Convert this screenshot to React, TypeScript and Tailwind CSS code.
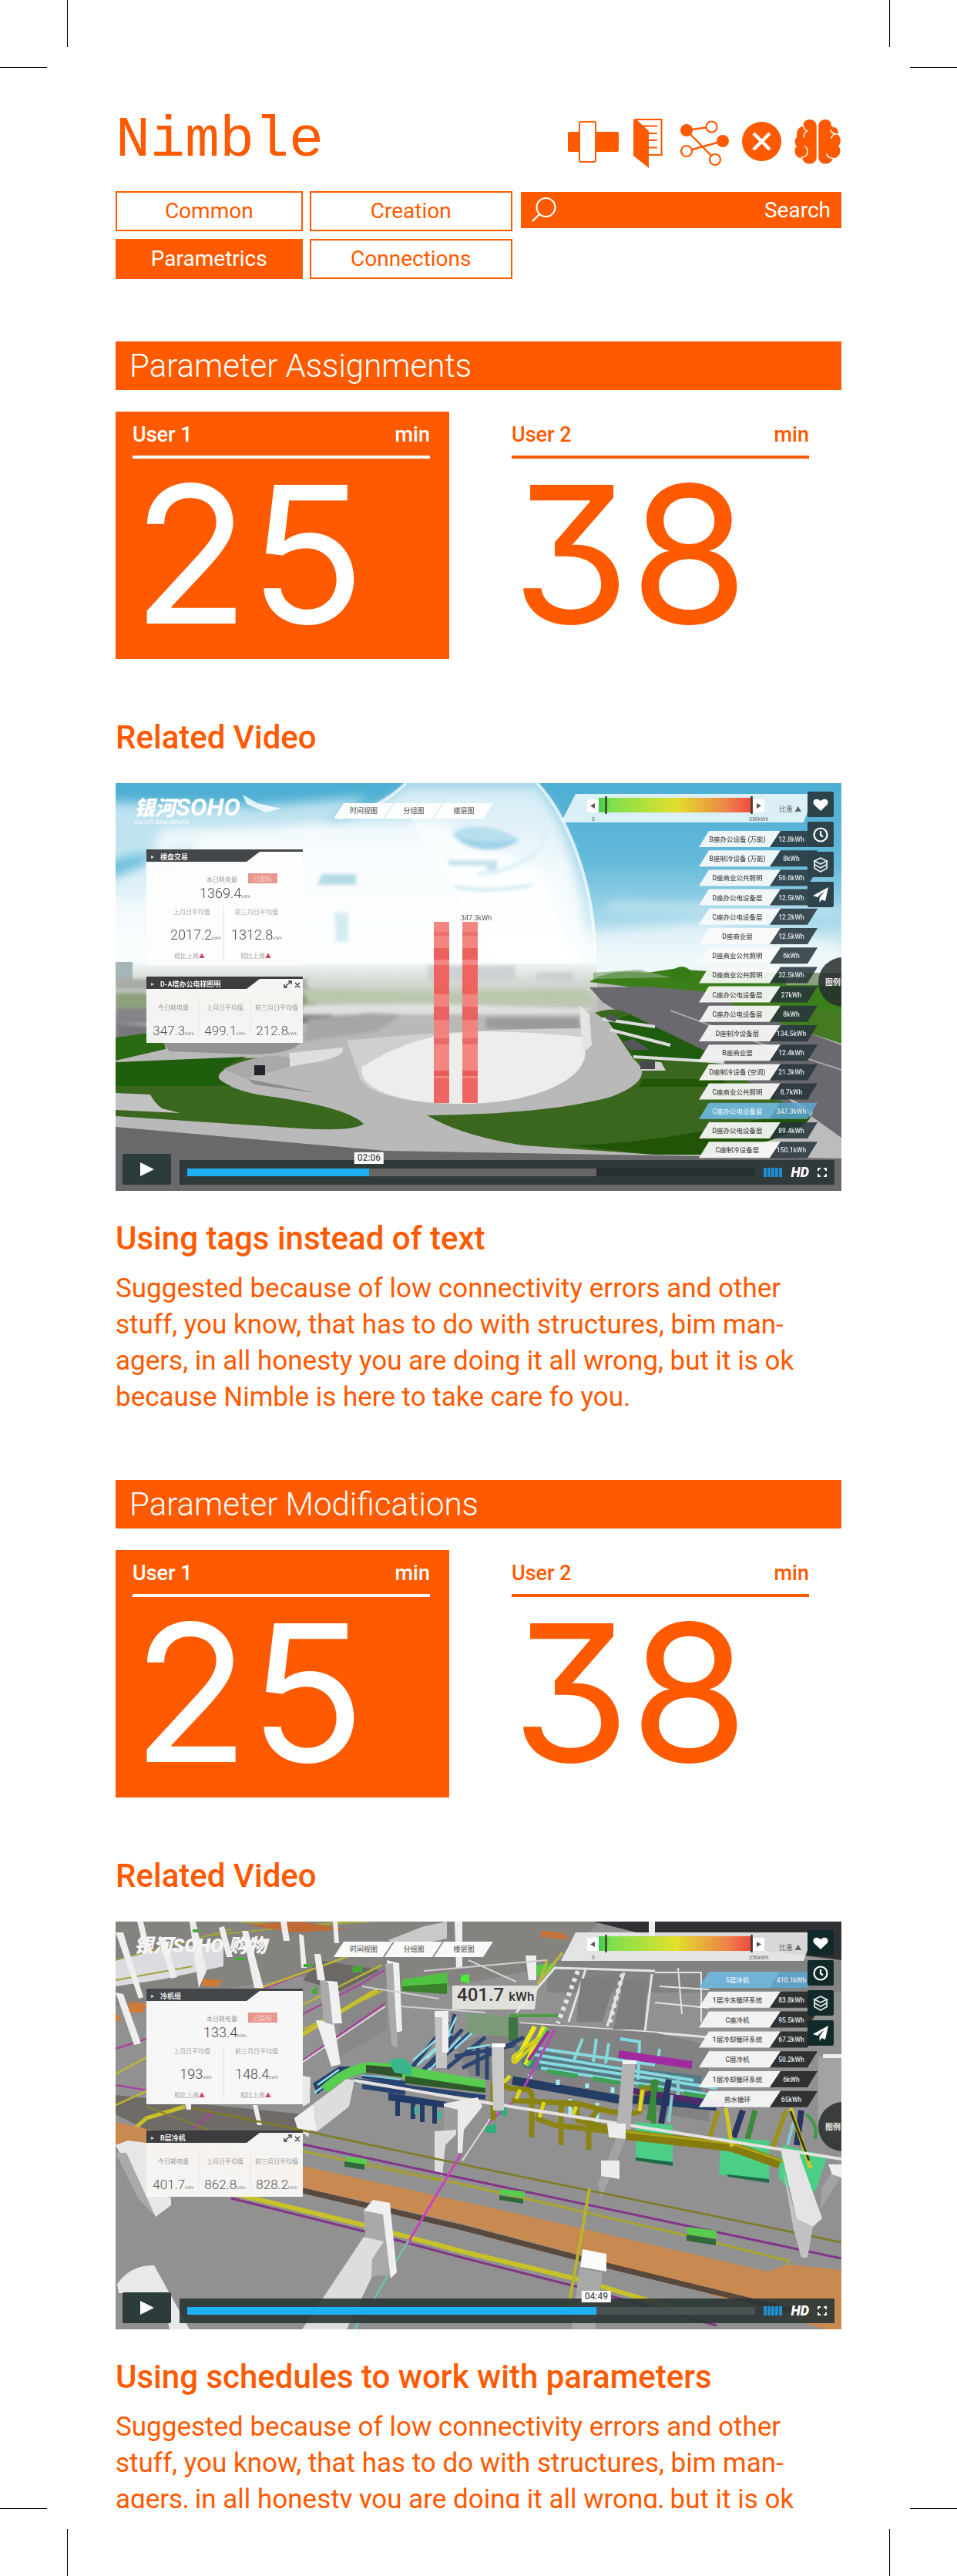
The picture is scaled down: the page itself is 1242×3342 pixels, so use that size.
import type { ReactNode } from "react";

const ORANGE = "#ff5a00";

/* ---------- Header icons ---------- */

function JoinIcon() {
  return (
    <svg width="68" height="64" viewBox="0 0 68 64" aria-hidden="true">
      <rect x="0" y="17" width="66" height="26" rx="2" fill={ORANGE} />
      <rect x="15" y="4" width="21" height="52" rx="2" fill="#fff" stroke={ORANGE} strokeWidth="2" />
    </svg>
  );
}

function BookIcon() {
  return (
    <svg width="44" height="64" viewBox="0 0 44 64" aria-hidden="true">
      <path d="M1.5 1H36.5V47H19" fill="none" stroke={ORANGE} strokeWidth="2" />
      <path d="M10 9.500H31M16 19H31M19 28H31M19 37.500H31" stroke={ORANGE} strokeWidth="2" />
      <path d="M0 1H4L20 16V64L0 48Z" fill={ORANGE} />
    </svg>
  );
}

function NetworkIcon() {
  return (
    <svg width="63" height="64" viewBox="0 0 63 64" aria-hidden="true">
      <path d="M8 15L40 10.500M8 15L45 53M8 42L55 29" stroke={ORANGE} strokeWidth="2.400" />
      <circle cx="8" cy="15" r="8" fill={ORANGE} />
      <circle cx="55" cy="29" r="8" fill={ORANGE} />
      <circle cx="40.500" cy="10.500" r="7" fill="#fff" stroke={ORANGE} strokeWidth="2.200" />
      <circle cx="8" cy="42" r="7" fill="#fff" stroke={ORANGE} strokeWidth="2.200" />
      <circle cx="45" cy="53" r="7" fill="#fff" stroke={ORANGE} strokeWidth="2.200" />
    </svg>
  );
}

function CloseIcon() {
  return (
    <svg width="51" height="64" viewBox="0 0 51 64" aria-hidden="true">
      <circle cx="25.500" cy="29.500" r="25.500" fill={ORANGE} />
      <path d="M15 19L36 40M36 19L15 40" stroke="#fff" strokeWidth="4.500" />
    </svg>
  );
}

function BrainIcon() {
  return (
    <svg width="61" height="64" viewBox="0 0 61 64" aria-hidden="true">
      <g fill={ORANGE}>
        <path d="M28.700 10V50C28.700 55 25 58.500 19.500 58.500C15 58.500 11.500 56 10 51.500C4 51 0.500 47 0.500 42C0.500 39 1.500 37 3 35.500C0 33 -0.500 27 3 24C2.500 16 5 10.500 11.500 10C11 4 15 1 20 1C25 1 28.700 4.500 28.700 10Z" />
        <path d="M31.300 10V50C31.300 55 35 58.500 40.500 58.500C45 58.500 48.500 56 50 51.500C56 51 59.500 47 59.500 42C59.500 39 58.500 37 57 35.500C61 32 60.500 25 57 21.500C57.500 14 54 10 48.500 10C48 4 45 1 40 1C35 1 31.300 4.500 31.300 10Z" />
      </g>
      <g fill="none" stroke="#fff" strokeWidth="1.500" strokeLinecap="round">
        <path d="M11 8Q12 15 17 16M16 16Q12 19 12 24" />
        <path d="M14 36Q18 39 16.500 46Q14 50 9 50.500" />
        <path d="M48 8Q51 10 51 11M47 15Q50 20 54 20Q57 20 58 20M53 20Q49 21 48 25" />
        <path d="M42 46Q43 51 51 51.500" />
      </g>
    </svg>
  );
}

/* ---------- Video frames ---------- */

type Panel = { top: number; title: string; values: string[] };

function SummaryPanel({ top, title, values }: Panel) {
  return (
    <g transform={`translate(40 ${top})`}>
      <rect width="203" height="150" fill="#fdfdfd" fillOpacity="0.950" />
      <path d="M0 0H203V3H147L130 16H0Z" fill="#43474a" />
      <text x="6" y="12" fontSize="8" fill="#ddd">▸</text>
      <text x="18" y="12.500" fontSize="9" fontWeight="700" fill="#f4f4f4">{title}</text>
      <text x="78" y="42" fontSize="8" fill="#999">本日耗电量</text>
      <rect x="132" y="31" width="38" height="13" fill="#e9968c" />
      <text x="151" y="41" fontSize="8" fill="#f7d8d3" textAnchor="middle">已超标</text>
      <g fontSize="18" fill="#4b4b4b" fontWeight="300" textAnchor="middle">
        <text x="102" y="63">{values[0]}<tspan fontSize="6">kWh</tspan></text>
        <text x="64" y="117">{values[1]}<tspan fontSize="6">kWh</tspan></text>
        <text x="143" y="117">{values[2]}<tspan fontSize="6">kWh</tspan></text>
      </g>
      <path d="M100 74V144" stroke="#e2e2e2" />
      <g fontSize="8" fill="#a5a5a5" textAnchor="middle">
        <text x="59" y="84">上月日平均值</text>
        <text x="143" y="84">前三月日平均值</text>
        <text x="56" y="141">相比上周<tspan fill="#d6455c">▲</tspan></text>
        <text x="142" y="141">相比上周<tspan fill="#d6455c">▲</tspan></text>
      </g>
    </g>
  );
}

function DetailPanel({ top, title, values }: Panel) {
  return (
    <g transform={`translate(40 ${top})`}>
      <rect width="203" height="86" fill="#f8f8f6" fillOpacity="0.960" />
      <path d="M0 0H203V3H147L130 16H0Z" fill="#3d3d3f" />
      <text x="6" y="12" fontSize="8" fill="#ddd">▸</text>
      <text x="18" y="12.500" fontSize="9" fontWeight="700" fill="#f4f4f4">{title}</text>
      <path d="M179 14L188 6M179 10V14H183M184 6H188V10M193 8L199 14M199 8L193 14" stroke="#444" fill="none" strokeWidth="1.500" />
      <g fontSize="8" fill="#9a9a9a" textAnchor="middle">
        <text x="35" y="43">今日耗电量</text>
        <text x="102" y="43">上月日平均值</text>
        <text x="169" y="43">前三月日平均值</text>
      </g>
      <path d="M68 28V78M135 28V78" stroke="#e6e6e6" />
      <g fontSize="17" fill="#555" fontWeight="300" textAnchor="middle">
        <text x="35" y="76">{values[0]}<tspan fontSize="6">kWh</tspan></text>
        <text x="102" y="76">{values[1]}<tspan fontSize="6">kWh</tspan></text>
        <text x="169" y="76">{values[2]}<tspan fontSize="6">kWh</tspan></text>
      </g>
    </g>
  );
}

type Row = { label: string; value: string; active?: boolean };

function TagRows({ rows, top, pitch, dark }: { rows: Row[]; top: number; pitch: number; dark: string }) {
  return (
    <g fontSize="8.500" textAnchor="middle" fontWeight="500">
      {rows.map((row, i) => (
        <g key={i} transform={`translate(757 ${top + i * pitch})`}>
          <path d="M13 0H106L92 21H0Z" fill={row.active ? "#6fb7de" : "#fafafa"} fillOpacity="0.930" />
          <path d="M106 0H154L141 21H92Z" fill={row.active ? "#5ba6d2" : dark} fillOpacity="0.860" />
          <text x="50" y="14" fill={row.active ? "#e4f3fb" : "#4d4d4d"}>{row.label}</text>
          <text x="120" y="14" fill="#e0e4e6">{row.value}</text>
        </g>
      ))}
    </g>
  );
}

function RangeTray({ id, fill }: { id: string; fill: string }) {
  return (
    <g>
      <defs>
        <linearGradient id={id}>
          <stop offset="0" stopColor="#3fca4a" />
          <stop offset="0.080" stopColor="#7de04d" />
          <stop offset="0.500" stopColor="#e2e02c" />
          <stop offset="0.850" stopColor="#ee7d48" />
          <stop offset="1" stopColor="#ee4640" />
        </linearGradient>
      </defs>
      <path d="M597 14H906L893 51H578Z" fill={fill} fillOpacity="0.880" />
      <rect x="612" y="21" width="15" height="17" fill="#fff" />
      <rect x="827" y="21" width="15" height="17" fill="#fff" />
      <rect x="627" y="19" width="200" height="19" fill={`url(#${id})`} />
      <path d="M636.500 17V40M825.500 17V40" stroke="#3c3d2c" strokeWidth="2.500" />
      <path d="M622 26L616 29.500L622 33ZM832 26L838 29.500L832 33Z" fill="#555" />
      <g fontSize="7" fill="#666">
        <text x="618" y="49">0</text>
        <text x="822" y="49">350kWh</text>
        <text x="861" y="37" fontSize="9">比重 ▲</text>
      </g>
    </g>
  );
}

function ViewTabs() {
  return (
    <g>
      <path d="M296 26H360L347 46H283ZM362 26H424L411 46H349ZM426 26H490L477 46H413Z" fill="#fff" fillOpacity="0.950" />
      <g fontSize="9" fontWeight="500" fill="#666" textAnchor="middle">
        <text x="322" y="39">时间视图</text>
        <text x="387" y="39">分组图</text>
        <text x="452" y="39">楼层图</text>
      </g>
    </g>
  );
}

function LegendKnob({ y }: { y: number }) {
  return (
    <g>
      <circle cx="944" cy={y} r="32" fill="#272d2b" fillOpacity="0.850" />
      <text x="921" y={y + 4} fontSize="10" fontWeight="700" fill="#eee">图例</text>
    </g>
  );
}

const frameFont = "block h-auto w-full font-['Roboto','Noto_Sans_CJK_SC',sans-serif]";

const towerRows: Row[] = [
  { label: "B座办公设备 (万能)", value: "12.8kWh" },
  { label: "B座制冷设备 (万能)", value: "8kWh" },
  { label: "D座商业公共照明", value: "56.6kWh" },
  { label: "D座办公电设备层", value: "12.5kWh" },
  { label: "C座办公电设备层", value: "12.2kWh" },
  { label: "D座商业层", value: "12.5kWh" },
  { label: "D座商业公共照明", value: "6kWh" },
  { label: "D座商业公共照明", value: "32.5kWh" },
  { label: "C座办公电设备层", value: "27kWh" },
  { label: "C座办公电设备层", value: "8kWh" },
  { label: "D座制冷设备层", value: "134.5kWh" },
  { label: "B座商业层", value: "12.4kWh" },
  { label: "D座制冷设备 (空调)", value: "21.3kWh" },
  { label: "C座商业公共照明", value: "8.7kWh" },
  { label: "C座办公电设备层", value: "347.3kWh", active: true },
  { label: "D座办公电设备层", value: "89.4kWh" },
  { label: "C座制冷设备层", value: "150.1kWh" },
];

const redBands: [number, number, string][] = [
  [180, 235, "#f4827d"],
  [193, 5, "#ec6a64"],
  [214, 15, "#ec5b56"],
  [236, 38, "#ef605b"],
  [290, 17, "#ea5f5c"],
  [331, 8, "#e96560"],
  [373, 7, "#e65753"],
  [383, 32, "#ee605b"],
];

function TowerFrame() {
  return (
    <svg viewBox="0 0 942 529" className={frameFont} role="img" aria-label="Energy model of a tower">
      <defs>
        <linearGradient id="sky" x1="0" y1="0" x2="0" y2="1">
          <stop offset="0" stopColor="#4caed3" />
          <stop offset="0.400" stopColor="#63b9da" />
          <stop offset="0.700" stopColor="#a6d8ea" />
          <stop offset="1" stopColor="#f2f9fa" />
        </linearGradient>
        <linearGradient id="haze" x1="0" y1="0" x2="0" y2="1">
          <stop offset="0" stopColor="#fff" stopOpacity="0.550" />
          <stop offset="0.450" stopColor="#fff" stopOpacity="0.850" />
          <stop offset="1" stopColor="#fff" stopOpacity="0.780" />
        </linearGradient>
        <linearGradient id="horizon" x1="0" y1="0" x2="0" y2="1">
          <stop offset="0" stopColor="#eef5f4" />
          <stop offset="0.450" stopColor="#cdd2c9" />
          <stop offset="1" stopColor="#b9bdb4" />
        </linearGradient>
        <filter id="soft" x="-20%" y="-20%" width="140%" height="140%">
          <feGaussianBlur stdDeviation="7" />
        </filter>
        <filter id="softer" x="-20%" y="-20%" width="140%" height="140%">
          <feGaussianBlur stdDeviation="2" />
        </filter>
        <clipPath id="tower-clip"><rect width="942" height="529" /></clipPath>
      </defs>
      <g clipPath="url(#tower-clip)">
        <rect width="942" height="250" fill="url(#sky)" />
        <g filter="url(#soft)" fill="#fff">
          <path d="M-20 24L180 30L330 18L260 60L90 80L-20 105Z" opacity="0.620" />
          <path d="M60 60L420 50L560 120L600 240L-20 240L-20 130L40 105Z" opacity="0.750" />
          <path d="M-20 150H60V240H-20Z" opacity="0.500" />
          <path d="M640 158L942 164V168L640 163Z" opacity="0.900" />
          <path d="M600 195L760 180L942 205V240H600Z" opacity="0.550" />
        </g>
        <path d="M165 15L184 26L215 33L195 38L170 27Z" fill="#fff" opacity="0.800" />
        <g filter="url(#soft)">
          <path d="M110 70C200 66 310 56 377 6H547C580 44 608 130 612 215V244H90C60 200 80 120 110 70Z" fill="url(#haze)" />
        </g>
        <path d="M377 0H547C588 44 620 130 622 215V240H500L380 40L290 46C320 38 350 26 377 0Z" fill="#fff" opacity="0.450" />
        <path d="M547 0C588 44 620 130 622 215V250" fill="none" stroke="#fff" strokeWidth="4" opacity="0.700" />
        <path d="M377 0C350 26 320 38 290 46" fill="none" stroke="#fff" strokeWidth="4" opacity="0.700" />
        <g filter="url(#softer)">
          <path d="M436 66Q455 52 485 58Q510 62 524 74Q500 84 475 84Q450 80 436 66Z" fill="#b8dff0" />
          <path d="M440 68Q470 80 524 74Q505 88 475 86Q450 82 440 68Z" fill="#9fd2e6" />
          <path d="M268 118H312V132H262Z" fill="#b5dce6" />
          <path d="M432 100H495V118H482V107H432Z" fill="#c3e3ea" />
          <path d="M440 134Q480 144 540 132" stroke="#cbe9f0" strokeWidth="4" fill="none" />
          <path d="M284 168H302V206H286Z" fill="#d4ebf2" />
          <path d="M430 22Q520 20 560 60Q550 110 470 118" stroke="#dcf0f6" strokeWidth="5" fill="none" />
        </g>

        <rect y="250" width="942" height="279" fill="#b9b9b9" />
        <rect y="234" width="625" height="66" fill="url(#horizon)" />
        <path d="M0 232H22V262H0Z" fill="#a6b6b8" />
        <g filter="url(#softer)">
          <path d="M0 254H250V268H0Z" fill="#a8aca6" />
          <path d="M0 272H260V292H0Z" fill="#8fa07b" />
          <path d="M0 292H280V312H0Z" fill="#838487" />
          <path d="M0 312L80 318L60 338H0Z" fill="#76777a" />
          <path d="M405 237H518V256H405ZM546 245H594V258H546Z" fill="#cdd1d4" />
          <path d="M248 256H560V262H248Z" fill="#d6d8d4" />
          <path d="M244 268L420 272L610 268L622 285H250Z" fill="#bac7ac" />
          <path d="M244 288L400 286L620 292L600 300H240Z" fill="#dde0dc" />
          <path d="M250 306L330 298L372 300L340 322L243 335Z" fill="#a5a6a8" />
          <path d="M482 304L600 304L604 326L530 322L480 318Z" fill="#9a9b9c" />
        </g>
        <path d="M615 258Q640 240 690 246L730 240Q745 246 942 246V300L700 268Z" fill="#3b7f1b" />
        <path d="M620 246L680 242L720 252L620 254Z" fill="#82a678" opacity="0.700" />
        <path d="M722 244Q735 232 747 244L746 254H724Z" fill="#347b18" />
        <path d="M870 246H942V262H870Z" fill="#8da081" />
        <path d="M615 265L690 264L760 270L942 340V470L790 420L690 320L632 284Z" fill="#6a696f" />
        <path d="M760 268L942 298V338L830 300Z" fill="#447b22" />
        <path d="M720 295L820 332L942 372" stroke="#a5a5aa" strokeWidth="2" fill="none" />
        <path d="M622 298Q650 288 672 302L770 356L942 460V482H700L530 470Q450 458 404 431C480 430 570 426 640 408C690 390 690 372 672 358L640 310Z" fill="#3a661d" />
        <path d="M640 310L668 300L770 350L760 360L672 354Z" fill="#1f5c10" />
        <path d="M632 306L700 316M642 320L720 340M672 355L790 362" stroke="#dcdcdc" strokeWidth="4" fill="none" />
        <path d="M683 384H790V394H680Z" fill="#225607" />
        <path d="M590 470Q720 468 900 420V482H700Z" fill="#215407" />
        <path d="M860 400L900 430L942 460V490L760 484Q900 460 905 426Z" fill="#bcbcbc" />
        <path d="M640 300L652 304L648 310L636 306ZM658 336L672 332L694 346H668Z" fill="#55565b" />
        <path d="M682 360L708 362L714 373H682Z" fill="#d0d0d0" />
        <path d="M681 360H700V371H681Z" fill="#48484d" />

        <path d="M0 330L60 322L65 345L0 360Z" fill="#2a6a12" />
        <path d="M0 366L130 358L195 356Q125 370 135 384Q150 398 190 405Q300 420 322 442Q310 452 240 448L0 432Z" fill="#3a661d" />
        <path d="M0 362L170 355Q125 372 135 386L150 393H0Z" fill="#1f5e0d" />
        <path d="M0 402L45 404Q50 414 60 422L84 428L0 424Z" fill="#c2c2c2" />
        <path d="M60 335L240 335Q235 350 180 352L70 348Z" fill="#929292" />
        <path d="M225 350L294 343Q300 352 270 360L226 368Z" fill="#dedede" />
        <path d="M140 371Q190 348 226 356V368L180 380L170 384Z" fill="#a9a9a9" />
        <path d="M172 384L262 402L180 391Z" fill="#8c8c8c" />
        <rect x="180" y="366" width="14" height="13" fill="#23242c" />

        <path d="M300 334Q460 318 610 318V352C607 386 540 418 440 416C370 415 318 400 316 378Z" fill="#cfcfcf" />
        <path d="M320 368Q390 322 480 322Q560 324 609 330V352C607 386 540 418 440 416C370 415 314 398 320 368Z" fill="#ededed" />
        <path d="M602 288L615 300L618 340L606 350Z" fill="#e4e4e4" />
        <path d="M0 446L350 477L942 487V529H0Z" fill="#69686a" />

        <g opacity="0.960">
          {[413, 450].map((x) => (
            <g key={x}>
              {redBands.map(([y, h, fill], i) => (
                <rect key={i} x={x} y={y} width="20" height={h} fill={fill} />
              ))}
            </g>
          ))}
        </g>
        <text x="448" y="178" fontSize="9" fill="#555">347.3kWh</text>

        <text x="24" y="42" fontSize="27" fontWeight="900" fontStyle="italic" fill="#fff">
          银河<tspan fontSize="32" fontWeight="700">SOHO</tspan>
        </text>
        <text x="24" y="53" fontSize="7" fontStyle="italic" fill="#fff">GALAXY SOHO BEIJING</text>
        <ViewTabs />
        <RangeTray id="range-tower" fill="#eef7fb" />
        <SummaryPanel top={86} title="楼盘交易" values={["1369.4", "2017.2", "1312.8"]} />
        <DetailPanel top={251} title="D-A塔办公电梯照明" values={["347.3", "499.1", "212.8"]} />
        <TagRows rows={towerRows} top={62} pitch={25.2} dark="#26333a" />
        <LegendKnob y={258} />
      </g>
    </svg>
  );
}

const pipeRows: Row[] = [
  { label: "5层冷机", value: "410.1kWh", active: true },
  { label: "1层冷冻循环系统", value: "83.8kWh" },
  { label: "C座冷机", value: "95.5kWh" },
  { label: "1层冷却循环系统", value: "67.2kWh" },
  { label: "C层冷机", value: "50.2kWh" },
  { label: "1层冷却循环系统", value: "6kWh" },
  { label: "热水循环", value: "65kWh" },
];

const backColumns = [
  "M0 14L10 14L36 98L30 100Z",
  "M0 92L10 94L33 158L24 160Z",
  "M28 0H36L45 38L38 40Z",
  "M55 22L64 20L80 72L72 74Z",
  "M96 0H104L118 64L108 86Z",
  "M134 8L141 6L152 46L144 46Z",
  "M164 12L172 12L192 86L180 86Z",
  "M214 0H222L226 25L218 25Z",
  "M238 16L244 18L248 60L241 60Z",
  "M282 0H288L290 28L284 28Z",
  "M258 42L266 42L272 76L262 76Z",
  "M440 0H450V60H442Z",
  "M532 44H546V76H536Z",
  "M692 0H700V24H692Z",
];

function PipeFrame() {
  return (
    <svg viewBox="0 0 942 529" className={frameFont} role="img" aria-label="Building services model with pipes and ducts">
      <defs>
        <clipPath id="pipe-clip"><rect width="942" height="529" /></clipPath>
      </defs>
      <g clipPath="url(#pipe-clip)" fill="none">
        <rect width="942" height="529" fill="#919192" />
        <path d="M0 0H630L560 60L400 90L250 70L0 110Z" fill="#858380" />
        <path d="M0 225L243 250V280L40 270L0 250Z" fill="#6f6c67" />
        <path d="M620 0H942V50L700 20Z" fill="#303035" />
        <path d="M560 50H942V92H560Z" fill="#828282" />
        <path d="M0 50L60 36L140 26V58L60 75L0 84Z" fill="#dcdce0" />
        <path d="M354 24L400 6L430 0V22L372 34Z" fill="#c9c9c9" />
        <path d="M160 0L240 6L330 0M0 50L150 10M120 18L300 0M0 76L100 58" stroke="#a5a23a" strokeWidth="2" />
        <path d="M170 4L230 14L300 10L240 0Z" fill="#c06a35" />
        <path d="M552 12L580 14L590 24L552 20Z" fill="#c3733a" />
        <path d="M112 74L138 76L134 84L112 84ZM18 104L40 106L36 118H16ZM0 120L6 122V130H0Z" fill="#cf7a37" />
        <path d="M243 76L262 50L340 62L350 110L290 90Z" fill="#6c6866" />
        <path d="M292 90L350 60L352 140L290 175Z" fill="#888" />
        <path d="M0 165L40 152M190 88L260 60M243 120L320 80L350 62M243 180L350 106M130 245L100 268M0 212L60 222" stroke="#a8439f" strokeWidth="2.500" />
        <path d="M0 198L40 176M0 238L40 220M150 100L316 40M243 108L346 56M243 140L346 90" stroke="#bdb82b" strokeWidth="2.500" />
        <path d="M0 290L40 255L90 240M240 148L340 88" stroke="#c9c12a" strokeWidth="5" />
        <path d="M40 240L120 270" stroke="#89822f" strokeWidth="2" />
        <path d="M243 182L350 110" stroke="#e4d8d8" strokeWidth="2" />
        <g fill="#eeeeee">{backColumns.map((d) => <path key={d} d={d} />)}</g>
        <path d="M265 76L288 78L294 132H278ZM260 128L283 130L292 185L280 188ZM352 50L368 54L372 142L364 144Z" fill="#f0f0f0" />
        <path d="M265 76L276 78L282 134L270 130ZM350 55L360 54L366 164L358 160Z" fill="#aaa" />
        <path d="M90 236H98L98 244H92ZM178 238H184L190 264H184Z" fill="#eee" />

        <path d="M372 75L430 66L432 92L372 88Z" fill="#51c142" />
        <path d="M372 84L430 80V94L372 90Z" fill="#3c7f2c" />
        <path d="M448 70L458 68L460 80L448 78Z" fill="#4cea3a" />
        <path d="M306 60L320 56L320 66L308 66ZM254 90L262 84V94H256ZM155 46H168V50H155ZM244 55H255V59H244ZM100 10H108V14H100Z" fill="#44a93a" />
        <path d="M320 84L420 100M370 110L480 118M400 64L560 50M458 50L520 78" stroke="#d0d0d0" strokeWidth="2" />
        <path d="M546 56L572 54L566 68L546 70Z" fill="#59c946" />
        <path d="M548 80L580 40M560 50L545 92" stroke="#bcb83a" strokeWidth="3" />

        <g stroke="#e4e4e4">
          <path d="M520 118L570 60L700 64M610 62L588 130M660 66L638 136M696 68L686 150M525 132L700 144L770 150" strokeWidth="3" />
          <path d="M600 64L574 132M658 68L640 136" strokeWidth="6" strokeDasharray="5 5" />
          <path d="M700 66H760V130M730 60L735 120M700 105L770 112M706 84L770 88" strokeWidth="2" />
        </g>
        <path d="M604 74L650 70L632 130H598ZM660 76L690 78L686 140H646Z" fill="#7d7d7d" />
        <path d="M525 132L700 144L770 160V260L640 235L460 200L440 160Z" fill="#828283" />

        <path d="M512 120H574V124H512Z" fill="#4b9c42" />
        <path d="M456 118L516 124V150L456 145Z" fill="#7b9a78" />
        <path d="M510 124H522V155H510Z" fill="#3d7442" />
        <path d="M384 190L432 130M396 196L450 140M408 190L460 145M430 190L480 150M440 175L520 160M470 160V200M482 160V205M440 120L430 170M450 190L530 150" stroke="#2b4470" strokeWidth="5" />
        <path d="M386 180L420 150M392 186L425 155M404 178L436 145M440 165L462 145M456 165L486 160M442 124L430 150M400 200L448 150" stroke="#8fe4ea" strokeWidth="2.500" />
        <path d="M256 210L290 188H306L262 224Z" fill="#264067" />
        <path d="M258 222L300 192M262 212L290 192" stroke="#90e3ef" strokeWidth="2.500" />

        <path d="M516 160L640 186L760 200V222L530 190Z" fill="#547a84" />
        <path d="M540 172L750 206M550 182L780 216M545 164L700 186M552 190L780 226" stroke="#88d9df" strokeWidth="4" />
        <path d="M560 194L780 230" stroke="#3fa155" strokeWidth="6" strokeDasharray="40 20" />
        <path d="M515 206L650 230L700 232L780 240" stroke="#253c64" strokeWidth="11" />
        <path d="M660 218L790 238" stroke="#4f2969" strokeWidth="8" />
        <path d="M574 205V212M612 210V216M538 198V204M645 215V222M590 230V250M625 235V260" stroke="#9feff6" strokeWidth="5" />
        <path d="M606 152L594 182M624 152L620 182M640 158L636 184M655 152L680 156L678 205M706 165L704 180" stroke="#80dbdf" strokeWidth="4" />
        <path d="M653 172L748 186" stroke="#a12aa0" strokeWidth="10" />

        <path d="M266 214Q296 186 330 182L350 184Q370 180 390 190L480 206V222L390 206L330 196Q300 198 276 222Z" fill="#58cd4f" />
        <path d="M325 186L372 190V202L325 196Z" fill="#31532d" />
        <path d="M355 182Q370 170 384 186V200L362 196Z" fill="#3bb58b" />
        <path d="M376 200L480 216V222L376 210Z" fill="#2d5b29" />
        <path d="M310 206L480 228M320 200L376 210M320 214L376 222" stroke="#284371" strokeWidth="6" />
        <path d="M312 208L380 218M320 199L370 205" stroke="#8cdae2" strokeWidth="2" />
        <path d="M354 222L430 234V242L354 232Z" fill="#233b69" />
        <path d="M366 230V252M386 232V256M398 234V260M414 236V262" stroke="#233b69" strokeWidth="6" />
        <path d="M390 240V250M420 246V256" stroke="#37b891" strokeWidth="5" />
        <path d="M232 255L300 204L310 206L303 240L262 272L258 248L250 280L236 268Z" fill="#dddddd" />
        <path d="M232 255L256 238L262 272L236 268Z" fill="#f0f0f0" />
        <path d="M243 200L253 202L252 235L243 240Z" fill="#e9e9e9" />

        <path d="M544 136L520 180M556 136L532 186" stroke="#ece718" strokeWidth="6" />
        <path d="M550 150L516 175Q514 185 520 182L558 145" stroke="#d5cd1c" strokeWidth="4" />
        <path d="M560 138L535 186" stroke="#5be13f" strokeWidth="4" />
        <path d="M570 140L530 215L518 232L482 262" stroke="#b945b6" strokeWidth="3" />
        <path d="M562 142L536 180" stroke="#a32aa1" strokeWidth="4" />
        <path d="M490 258V212Q490 206 498 208L510 216L535 218Q542 222 540 232V280M514 232L600 236L640 246Q670 252 680 246L684 218L700 214M556 234L548 256L570 264L640 272M578 290V240Q586 232 598 240L600 258L640 268M614 296V260L626 244" stroke="#8b8412" strokeWidth="7" />
        <path d="M492 212Q505 210 512 200M556 234L550 254M598 240L594 250M684 218L680 246M525 218L520 230" stroke="#e0d51d" strokeWidth="5" />
        <path d="M500 240L508 238V252H500ZM480 266L494 262V274H480Z" fill="#2fae7c" />

        <path d="M698 205V262M702 205L692 258M830 245L820 282" stroke="#3a8a3a" strokeWidth="7" />
        <path d="M718 205L708 262M814 245L802 280M890 245L884 290" stroke="#27355f" strokeWidth="8" />
        <path d="M730 200V225M722 225L718 260M880 260L872 290" stroke="#82cdd5" strokeWidth="4" />
        <path d="M896 250Q912 262 908 282" stroke="#3a9a47" strokeWidth="4" />
        <path d="M675 260L723 264V314L675 306Z" fill="#4bce86" />
        <path d="M675 306L723 312V317L675 310Z" fill="#1d6b48" />
        <path d="M786 280L848 284V336L783 328Z" fill="#4bce86" />
        <path d="M794 328L848 334V339L794 331Z" fill="#1f6d4a" />
        <path d="M866 290L924 304L908 350L870 344L860 330Z" fill="#4bce86" />
        <path d="M640 274L800 292L862 314" stroke="#857b0e" strokeWidth="13" />
        <path d="M640 270L800 288L870 312" stroke="#aaa31b" strokeWidth="3" />
        <path d="M782 245L770 285M870 245L852 296" stroke="#9b9317" strokeWidth="6" />
        <path d="M792 242L800 292M876 242L902 320" stroke="#d2c81c" strokeWidth="5" />
        <path d="M876 246L900 310" stroke="#3d3a10" strokeWidth="3" />
        <path d="M310 206L450 230L640 260L942 308" stroke="#e6e2e2" strokeWidth="4" />

        <path d="M414 116H430V190H416Z" fill="#c4c4c4" />
        <path d="M414 116H432V124H414ZM424 124H432V170H424Z" fill="#f0f0f0" />
        <path d="M488 158H504V245H490Z" fill="#c9c9c9" />
        <path d="M488 158H506V163H488Z" fill="#fff" />
        <path d="M658 180L675 182L668 270H650Z" fill="#b3b3b3" />
        <path d="M658 180H676V185H658Z" fill="#f4f4f4" />
        <path d="M650 280L662 282L630 360L626 340Z" fill="#a3a3a4" />
        <path d="M638 262L662 262V282L640 280ZM630 310H654V334L630 330Z" fill="#ececec" />
        <path d="M426 236L470 228L476 240L452 270L450 300L444 300V244L426 240Z" fill="#eaeaea" />
        <path d="M426 240L444 244V274L426 270Z" fill="#9c9c9c" />
        <path d="M414 272L442 270V276L428 290L424 330L414 324Z" fill="#dedede" />
        <path d="M486 256L450 310" stroke="#ddd" strokeWidth="2" />

        <path d="M0 260L243 317L500 374L847 454L873 445L942 452V529H920L637 442L450 392L243 345L0 292Z" fill="#c98a52" />
        <path d="M243 349L450 397L637 446L890 508" stroke="#59483c" strokeWidth="7" />
        <path d="M100 242L243 271L450 315L942 416" stroke="#7f7b22" strokeWidth="2.500" />
        <path d="M243 289L450 333L942 437" stroke="#84358a" strokeWidth="3" />
        <path d="M243 298L330 316M410 332L500 352L740 407L873 440V446" stroke="#a9a52e" strokeWidth="3" />
        <path d="M320 314L420 335" stroke="#a49e2b" strokeWidth="5" strokeDasharray="5 2" />
        <path d="M150 352L323 394L450 428L600 464L720 500" stroke="#c7c229" strokeWidth="6" />
        <path d="M150 359L323 402L450 436L600 474L780 524" stroke="#813684" strokeWidth="3" />
        <path d="M300 305L326 308V316L300 312ZM499 347L531 350V358L499 354ZM742 396L780 401V411L742 406Z" fill="#57ce4b" />
        <path d="M297 311L323 315V322L297 318ZM498 355L529 360V366L498 361ZM741 406L779 412V420L741 414Z" fill="#31693b" />
        <path d="M448 302L382 412V418" stroke="#c643bd" strokeWidth="3" />
        <path d="M380 414L334 492L310 529" stroke="#6fc3b1" strokeWidth="2.500" />
        <path d="M615 346L604 410L585 515" stroke="#b9b42d" strokeWidth="4" />
        <path d="M322 375L348 380L362 458L332 460L324 410Z" fill="#a9a9a9" />
        <path d="M322 375L334 361L356 365L365 455L357 463L347 380Z" fill="#efefef" />
        <path d="M322 409L348 415L333 438L332 462L300 529H242Z" fill="#dddddd" />
        <path d="M0 290L16 284L40 287V350L72 358V368L52 383L22 330Z" fill="#e7e7e7" />
        <path d="M14 300L52 383L30 360L0 300Z" fill="#aaa" />
        <path d="M2 470Q20 445 50 446L70 482L96 529H70L60 482L4 482Z" fill="#e9e9e9" />
        <path d="M602 450L632 455L622 529H592Z" fill="#a8a8a8" />
        <path d="M606 425L637 431V454L603 448Z" fill="#fcfcfc" />
        <path d="M863 295L886 298L917 385L905 396L884 386Z" fill="#e4e4e4" />
        <path d="M866 320L884 386L905 396L898 436L890 436L880 400Z" fill="#c2c2c2" />
        <path d="M917 345L935 315H942V330L914 375ZM912 175L942 172V290L912 270Z" fill="#a3a3a4" />
        <path d="M925 315H942V332L930 328ZM918 172H942V177H918Z" fill="#eeeeee" />

        <path d="M437 83L548 83L544 114H437Z" fill="#e9e9e6" fillOpacity="0.900" />
        <text x="443" y="103" fontSize="24" fontWeight="500" fill="#333">401.7 <tspan fontSize="17">kWh</tspan></text>
        <text x="24" y="40" fontSize="25" fontWeight="900" fontStyle="italic" fill="#f5f5f5">银河SOHO 购物</text>
        <ViewTabs />
        <RangeTray id="range-pipe" fill="#efefef" />
        <SummaryPanel top={87} title="冷机组" values={["133.4", "193", "148.4"]} />
        <DetailPanel top={271} title="B层冷机" values={["401.7", "862.8", "828.2"]} />
        <TagRows rows={pipeRows} top={65} pitch={25.8} dark="#1f2222" />
        <LegendKnob y={266} />
      </g>
    </svg>
  );
}

/* ---------- Video player ---------- */

const sideActions: { name: string; icon: ReactNode }[] = [
  {
    name: "Like",
    icon: <path d="M12 20L3.500 12Q1.500 9 3.500 6Q7 3 12 7Q17 3 20.500 6Q22.500 9 20.500 12Z" fill="#fff" />,
  },
  {
    name: "Watch later",
    icon: (
      <g fill="none" stroke="#fff" strokeWidth="2.200">
        <circle cx="12" cy="12" r="8.500" />
        <path d="M12 7V12.500L15 14.500" />
      </g>
    ),
  },
  {
    name: "Add to collection",
    icon: (
      <g fill="none" stroke="#e4eaea" strokeWidth="1.800">
        <path d="M12 3L20 7L12 11L4 7Z" />
        <path d="M4 7V16.500L12 21L20 16.500V7M4 11.500L12 16L20 11.500" />
      </g>
    ),
  },
  { name: "Share", icon: <path d="M22 2L2 13L8 15L17 7L10.500 16V22L13.500 18L18 20Z" fill="#fff" /> },
];

type PlayerProps = {
  frame: ReactNode;
  time: string;
  progress: number;
  trackClass: string;
  tipClass: string;
  actionClass: string;
};

function Player({ frame, time, progress, trackClass, tipClass, actionClass }: PlayerProps) {
  return (
    <div className="relative overflow-hidden">
      {frame}
      <div className="absolute top-[11px] right-[10px] flex flex-col gap-1.5">
        {sideActions.map((action) => (
          <button
            key={action.name}
            type="button"
            aria-label={action.name}
            className={`flex h-[33px] w-[34px] items-center justify-center rounded-xs ${actionClass}`}
          >
            <svg width="24" height="24" viewBox="0 0 24 24" aria-hidden="true">{action.icon}</svg>
          </button>
        ))}
      </div>
      <div className="absolute inset-x-[9px] bottom-2 flex items-end gap-[11px]">
        <button
          type="button"
          aria-label="Play"
          className="flex h-10 w-[63px] shrink-0 items-center justify-center rounded-xs bg-[#2c3b3b]"
        >
          <svg width="20" height="18" viewBox="0 0 20 18" aria-hidden="true">
            <path d="M1 0L19 9L1 18Z" fill="#fff" />
          </svg>
        </button>
        <div className="flex h-8 grow items-center gap-[11px] bg-[#2a3535]/90 px-2.5">
          <div className="relative flex grow items-center">
            <input
              type="range"
              aria-label="Seek"
              defaultValue={progress}
              className={`h-2.5 w-full appearance-none [&::-webkit-slider-thumb]:w-0 [&::-webkit-slider-thumb]:appearance-none ${trackClass}`}
            />
            <span
              className={`absolute bottom-4 -translate-x-1/2 bg-white px-1 text-[12px] leading-[15px] font-medium text-[#555] ${tipClass}`}
            >
              {time}
            </span>
          </div>
          <button type="button" aria-label="Volume" className="flex gap-px">
            <span className="h-3 w-1 bg-[#1f8fd0]" />
            <span className="h-3 w-1 bg-[#1f8fd0]" />
            <span className="h-3 w-1 bg-[#1f8fd0]" />
            <span className="h-3 w-1 bg-[#1f8fd0]" />
            <span className="h-3 w-1 bg-[#1f8fd0]" />
          </button>
          <button type="button" className="text-[18px] leading-4 font-black text-white italic">HD</button>
          <button type="button" aria-label="Full screen">
            <svg width="12" height="12" viewBox="0 0 12 12" aria-hidden="true">
              <path d="M1 4V1H4M8 1H11V4M11 8V11H8M4 11H1V8" fill="none" stroke="#fff" strokeWidth="2" />
            </svg>
          </button>
        </div>
      </div>
    </div>
  );
}

/* ---------- Page ---------- */

function Stat({ user, value, filled }: { user: string; value: string; filled?: boolean }) {
  return (
    <div className={`h-[321px] pr-[25px] pl-[22px] ${filled ? "bg-[#ff5a00] text-white" : ""}`}>
      <div className="flex justify-between border-b-4 border-current pt-4 pb-3 text-[27px] leading-[29px] font-medium">
        <span>{user}</span>
        <span>min</span>
      </div>
      <p className="pt-1 font-['Inter',sans-serif] text-[248px] leading-[240px] [font-feature-settings:'cv09']">
        {value}
      </p>
    </div>
  );
}

const excerpt = [
  "Suggested because of low connectivity errors and other",
  "stuff, you know, that has to do with structures, bim man-",
  "agers, in all honesty you are doing it all wrong, but it is ok",
  "because Nimble is here to take care fo you.",
];

type SectionProps = { title: string; player: ReactNode; caption: string; lines: string[]; cut?: boolean };

function ParameterSection({ title, player, caption, lines, cut }: SectionProps) {
  return (
    <section>
      <h2 className="bg-[#ff5a00] px-[18px] text-[42px] leading-[63px] font-light text-white">{title}</h2>
      <div className="mt-7 grid grid-cols-2 gap-x-[59px] pr-[17px]">
        <Stat user="User 1" value="25" filled />
        <Stat user="User 2" value="38" />
      </div>
      <h3 className="mt-[78px] text-[42px] leading-12 font-medium">Related Video</h3>
      <div className="mt-[35px]">{player}</div>
      <h3 className="mt-[38px] text-[42px] leading-12 font-medium">{caption}</h3>
      <p className={`mt-[17px] text-[35px] leading-[47px] ${cut ? "max-h-[129px] overflow-hidden" : ""}`}>
        {lines.map((line) => (
          <span key={line} className="block">{line}</span>
        ))}
      </p>
    </section>
  );
}

const tabs = ["Common", "Creation", "Parametrics", "Connections"];

function CropMarks() {
  return (
    <div aria-hidden="true">
      <span className="absolute top-0 left-[87px] h-[61px] w-px bg-black" />
      <span className="absolute top-[87px] left-0 h-px w-[61px] bg-black" />
      <span className="absolute top-0 right-[87px] h-[61px] w-px bg-black" />
      <span className="absolute top-[87px] right-0 h-px w-[61px] bg-black" />
      <span className="absolute bottom-0 left-[87px] h-[61px] w-px bg-black" />
      <span className="absolute bottom-[87px] left-0 h-px w-[61px] bg-black" />
      <span className="absolute right-[87px] bottom-0 h-[61px] w-px bg-black" />
      <span className="absolute right-0 bottom-[87px] h-px w-[61px] bg-black" />
    </div>
  );
}

export default function App() {
  return (
    <div className="relative bg-white px-[150px] pt-[154px] pb-[88px] font-['Roboto',sans-serif] text-[#ff5a00]">
      <CropMarks />
      <header>
        <div className="flex h-16 items-start justify-between">
          <h1 className="font-['Liberation_Mono',monospace] text-[75px] leading-[58px]">Nimble</h1>
          <div className="flex gap-[17px]">
            <button type="button" aria-label="Join"><JoinIcon /></button>
            <button type="button" aria-label="Library"><BookIcon /></button>
            <button type="button" aria-label="Network"><NetworkIcon /></button>
            <button type="button" aria-label="Close"><CloseIcon /></button>
            <button type="button" aria-label="Learn"><BrainIcon /></button>
          </div>
        </div>
        <div className="mt-[30px] grid grid-cols-[515fr_416fr] gap-x-[11px]">
          <nav className="grid grid-cols-[243fr_264fr] gap-x-[9px] gap-y-2.5">
            {tabs.map((tab) => (
              <button
                key={tab}
                type="button"
                className={`h-[52px] border-2 border-[#ff5a00] text-[28px] leading-8 ${
                  tab === "Parametrics" ? "bg-[#ff5a00] text-white" : ""
                }`}
              >
                {tab}
              </button>
            ))}
          </nav>
          <label className="mt-px flex h-[47px] items-center bg-[#ff5a00] px-3.5 text-white">
            <svg width="32" height="34" viewBox="0 0 32 34" className="shrink-0" aria-hidden="true">
              <circle cx="18.500" cy="13" r="12" fill="none" stroke="#fff" strokeWidth="2.200" />
              <path d="M10 22L1 31" stroke="#fff" strokeWidth="2.400" />
            </svg>
            <input
              type="text"
              aria-label="Search"
              placeholder="Search"
              className="w-full min-w-0 bg-transparent text-right text-[28px] leading-8 outline-none placeholder:text-white"
            />
          </label>
        </div>
      </header>
      <main className="mt-[81px] flex flex-col gap-[84px]">
        <ParameterSection
          title="Parameter Assignments"
          caption="Using tags instead of text"
          lines={excerpt}
          player={
            <Player
              frame={<TowerFrame />}
              time="02:06"
              progress={32}
              trackClass="bg-[linear-gradient(to_right,#1fb0f3_32%,#666666_32%,#666666_72%,#263030_72%)]"
              tipClass="left-[32%]"
              actionClass="bg-[#2d434b]"
            />
          }
        />
        <ParameterSection
          title="Parameter Modifications"
          caption="Using schedules to work with parameters"
          lines={excerpt.slice(0, 3)}
          cut
          player={
            <Player
              frame={<PipeFrame />}
              time="04:49"
              progress={72}
              trackClass="bg-[linear-gradient(to_right,#1fb0f3_72%,#4a5352_72%)]"
              tipClass="left-[72%]"
              actionClass="bg-[#12292a]"
            />
          }
        />
      </main>
    </div>
  );
}
